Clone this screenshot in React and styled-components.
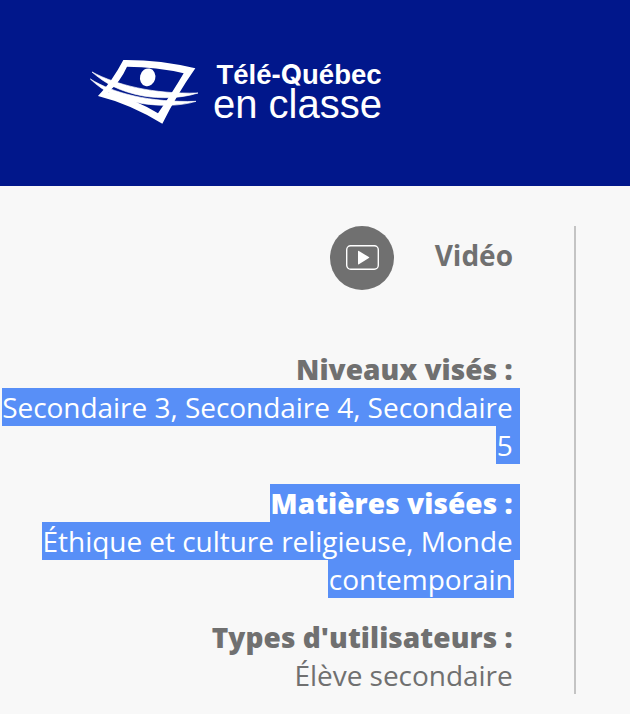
import styled, { createGlobalStyle } from "styled-components";

const App = () => {
  return (
    <>
      <GlobalStyle />
      <Header>
        <Logo />
      </Header>
      <Main>
        <Sidebar>
          <MediaType>
            <MediaIcon>
              <VideoIcon />
            </MediaIcon>
            <MediaLabel>Vidéo</MediaLabel>
          </MediaType>
          <Details>
            <Group>
              <Title>Niveaux visés :</Title>
              <Value $selected $trail>Secondaire 3, Secondaire 4, Secondaire</Value>
              <Value $selected $trail>5</Value>
            </Group>
            <Group>
              <Title $selected $trail>Matières visées :</Title>
              <Value $selected $trail>Éthique et culture religieuse, Monde</Value>
              <Value $selected>contemporain</Value>
            </Group>
            <Group>
              <Title>Types d'utilisateurs :</Title>
              <Value>Élève secondaire</Value>
            </Group>
          </Details>
        </Sidebar>
      </Main>
    </>
  );
};

const Logo = () => (
  <LogoSvg viewBox="0 0 294 68" aria-label="Télé-Québec en classe">
    <g transform="translate(-10 -8) scale(0.33333)" fill="#fff">
      <path
        fillRule="evenodd"
        d="M130 30Q240 29 346 55Q290 135 247 221Q150 162 54 138Q96 95 130 30ZM141 50Q120 97 84 127Q165 148 234 190Q279 125 311 70Q230 50 141 50Z"
      />
      <g stroke="#fff" strokeWidth="2">
        <path d="M36 66C110 105 220 133 354 129C300 146 240 146 190 138C120 125 75 100 36 66Z" />
        <path d="M31 87C100 130 210 158 348 154C300 169 240 168 190 161C120 150 70 125 31 87Z" />
      </g>
      <ellipse cx="203" cy="82" rx="23" ry="27" transform="rotate(14 203 82)" />
    </g>
    <text>
      <tspan x="126.5" y="25.5" fontSize="27.5" fontWeight="700">
        Télé-
        <LogoQ>Q</LogoQ>
        uébec
      </tspan>
      <tspan x="123" y="60" fontSize="40">
        en classe
      </tspan>
    </text>
  </LogoSvg>
);

const VideoIcon = () => (
  <svg width="34" height="26" viewBox="0 0 34 26" fill="none">
    <rect x="1.7" y="0.7" width="31.6" height="23.6" rx="4" stroke="#fff" strokeWidth="1.4" />
    <path d="M13 6.4v12.4q0 .9.9.4l10-6.1q.7-.5 0-1l-10-6.1q-.9-.5-.9.4Z" fill="#fff" />
  </svg>
);

const GlobalStyle = createGlobalStyle`
  body {
    margin: 0;
    background-color: #f8f8f8;
    color: #707070;
    font-family: "Open Sans", sans-serif;
    font-size: 28px;
    line-height: 38px;
    overflow: hidden;
  }
`;
const Header = styled.header`
  height: 186px;
  padding: 58px 0 0 90px;
  box-sizing: border-box;
  background-color: #01178b;
`;
const LogoSvg = styled.svg`
  display: block;
  width: 294px;
  height: 68px;
  overflow: visible;

  text {
    fill: #fff;
    font-family: "Liberation Sans", Arial, sans-serif;
  }
`;
/* short-tailed Q, so it stays clear of the line below */
const LogoQ = styled.tspan`
  font-family: Inter, sans-serif;
  font-size: 27.5px;
`;
const Main = styled.main`
  padding-top: 40px;
`;
const Sidebar = styled.aside`
  width: 576px;
  height: 468px;
  box-sizing: border-box;
  padding-right: 60px;
  border-right: 2px solid #c4c4c4;
`;
const MediaType = styled.div`
  display: flex;
  justify-content: flex-end;
  align-items: center;
  height: 64px;
`;
const MediaIcon = styled.div`
  display: flex;
  align-items: center;
  justify-content: center;
  width: 64px;
  height: 64px;
  border-radius: 50%;
  background-color: #707070;
`;
const MediaLabel = styled.span`
  width: 119px;
  margin-bottom: 6px;
  padding-right: 1px;
  font-weight: 700;
  text-align: right;
`;
const Details = styled.div`
  display: flex;
  flex-direction: column;
  gap: 20px;
  margin-top: 60px;
`;
const Group = styled.div`
  display: flex;
  flex-direction: column;
  align-items: flex-end;
`;
const Line = styled.div`
  height: 38px;
  padding-left: 0.6px;
  white-space: nowrap;
  color: ${(props) => (props.$selected ? "#fff" : "inherit")};
  background-color: ${(props) => (props.$selected ? "#588ff7" : "transparent")};
  padding-right: ${(props) => (props.$trail ? "7.3px" : "1.3px")};
  margin-right: ${(props) => (props.$trail ? "-6px" : "0")};
`;
const Title = styled(Line)`
  font-weight: 800;
  letter-spacing: 0.06px;
`;
const Value = styled(Line)`
  font-weight: 400;
  letter-spacing: -0.035px;
`;

export default App;
